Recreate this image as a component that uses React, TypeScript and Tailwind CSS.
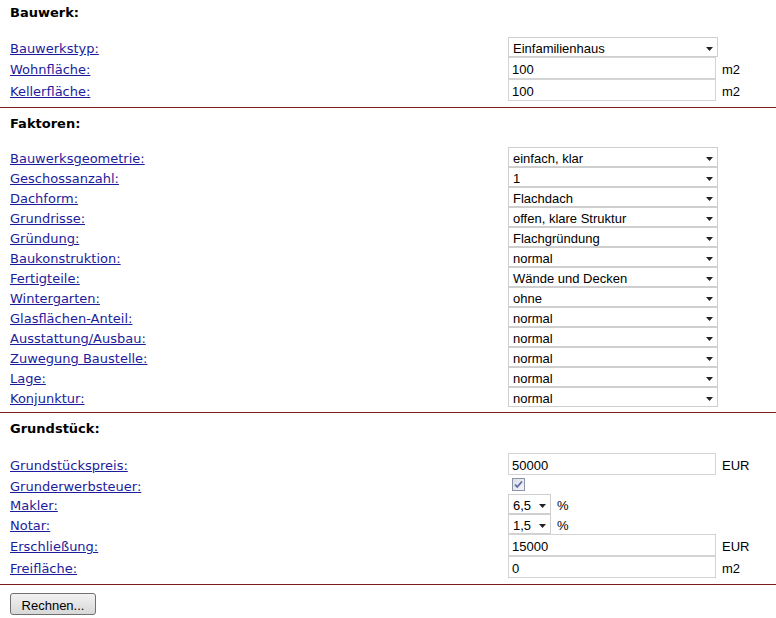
const label = "font-['DejaVu_Sans',Verdana,sans-serif] text-[13px]";
const ctrl = "font-['Liberation_Sans',Arial,sans-serif] text-[13px] text-black";

type Row =
  | { kind: "select"; label: string; value: string; unit?: string; small?: boolean }
  | { kind: "input"; label: string; value: string; unit?: string }
  | { kind: "check"; label: string };

const bauwerk: Row[] = [
  { kind: "select", label: "Bauwerkstyp:", value: "Einfamilienhaus" },
  { kind: "input", label: "Wohnfläche:", value: "100", unit: "m2" },
  { kind: "input", label: "Kellerfläche:", value: "100", unit: "m2" },
];

const faktoren: Row[] = [
  ["Bauwerksgeometrie:", "einfach, klar"],
  ["Geschossanzahl:", "1"],
  ["Dachform:", "Flachdach"],
  ["Grundrisse:", "offen, klare Struktur"],
  ["Gründung:", "Flachgründung"],
  ["Baukonstruktion:", "normal"],
  ["Fertigteile:", "Wände und Decken"],
  ["Wintergarten:", "ohne"],
  ["Glasflächen-Anteil:", "normal"],
  ["Ausstattung/Ausbau:", "normal"],
  ["Zuwegung Baustelle:", "normal"],
  ["Lage:", "normal"],
  ["Konjunktur:", "normal"],
].map(([l, v]) => ({ kind: "select" as const, label: l, value: v }));

const grundstueck: Row[] = [
  { kind: "input", label: "Grundstückspreis:", value: "50000", unit: "EUR" },
  { kind: "check", label: "Grunderwerbsteuer:" },
  { kind: "select", label: "Makler:", value: "6,5", unit: "%", small: true },
  { kind: "select", label: "Notar:", value: "1,5", unit: "%", small: true },
  { kind: "input", label: "Erschließung:", value: "15000", unit: "EUR" },
  { kind: "input", label: "Freifläche:", value: "0", unit: "m2" },
];

function Arrow() {
  return (
    <svg width="7" height="4" viewBox="0 0 7 4" className="mt-[3px] shrink-0">
      <path d="M0 0h7L3.5 4z" fill="#222" />
    </svg>
  );
}

function FormRow({ row }: { row: Row }) {
  const h =
    row.kind === "input" ? "h-[22px]" : row.kind === "check" ? "h-[19px]" : "h-[20px]";
  return (
    <div className={`flex items-center ${h}`}>
      <div className="w-[498px] shrink-0">
        <a href="#" className={`${label} text-[#1c1c9c] underline`}>
          {row.label}
        </a>
      </div>
      {row.kind === "select" && (
        <div
          className={`${ctrl} flex h-[20px] items-center justify-between border border-[#cfcfcf] bg-white pl-[4px] pr-[4px] ${
            row.small ? "w-[43px]" : "w-[210px]"
          }`}
        >
          <span className="pt-[4px]">{row.value}</span>
          <Arrow />
        </div>
      )}
      {row.kind === "input" && (
        <div
          className={`${ctrl} flex h-[22px] w-[208px] items-center border border-[#d4d4d4] bg-white pl-[3px] pt-[4px]`}
        >
          {row.value}
        </div>
      )}
      {row.kind === "check" && (
        <div className="ml-[4px] flex h-[13px] w-[13px] items-center justify-center border border-[#8a93a8] bg-gradient-to-br from-[#dcdee6] to-[#f4f4f6]">
          <svg width="9" height="9" viewBox="0 0 9 9">
            <path d="M1 4.5l2.2 2.5L8 1.5" fill="none" stroke="#5b6aa6" strokeWidth="1.8" />
          </svg>
        </div>
      )}
      {"unit" in row && row.unit && (
        <span className={`${ctrl} ml-[6px] pt-[4px]`}>{row.unit}</span>
      )}
    </div>
  );
}

function Section({
  title,
  rows,
  top,
  gap,
  after,
}: {
  title: string;
  rows: Row[];
  top: string;
  gap: string;
  after: string;
}) {
  return (
    <div>
      <div className={`${top} pl-[10px]`}>
        <h3 className={`${label} h-[16px] font-bold leading-[16px] text-black`}>{title}</h3>
        <div className={`${gap} flex flex-col`}>
          {rows.map((r) => (
            <FormRow key={r.label} row={r} />
          ))}
        </div>
      </div>
      <div className={`${after} h-px bg-[#7a1c1c]`} />
    </div>
  );
}

export default function App() {
  return (
    <div className="min-h-[618px] w-[776px] bg-white">
      <Section title="Bauwerk:" rows={bauwerk} top="pt-[5px]" gap="mt-[16px]" after="mt-[6px]" />
      <Section title="Faktoren:" rows={faktoren} top="pt-[8px]" gap="mt-[15px]" after="mt-[5px]" />
      <Section title="Grundstück:" rows={grundstueck} top="pt-[8px]" gap="mt-[16px]" after="mt-[6px]" />
      <div className="pl-[10px] pt-[7px]">
        <button
          className={`${ctrl} h-[22px] w-[86px] rounded-[3px] border border-[#707070] bg-gradient-to-b from-[#f2f2f2] to-[#d8d8d8] pt-[2px]`}
        >
          Rechnen...
        </button>
      </div>
    </div>
  );
}
